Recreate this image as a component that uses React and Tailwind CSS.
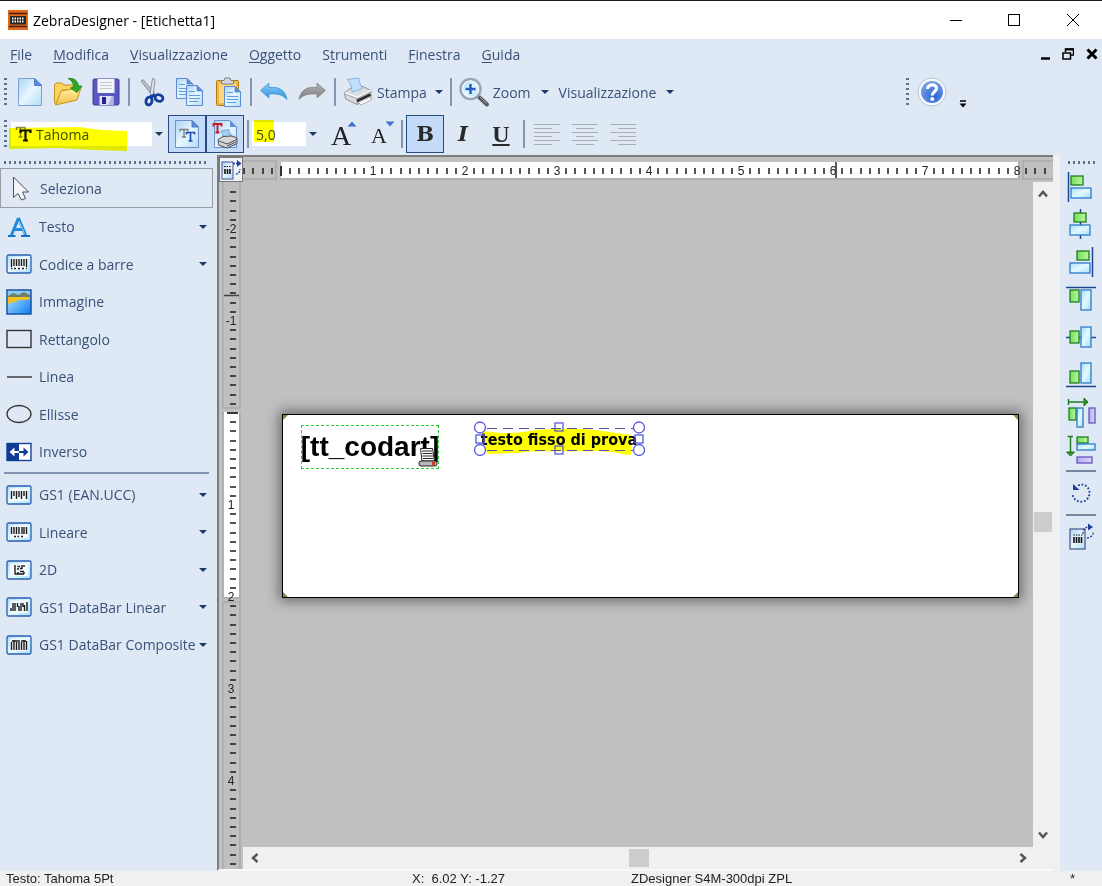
import React, { useState } from 'react';

const CM = 92;

/* ---------- toolbar icons ---------- */

function IconDefs() {
  return (
    <svg width="0" height="0" className="absolute" aria-hidden="true">
      <defs>
        <linearGradient id="paper" x1="0" y1="0" x2="1" y2="1">
          <stop offset="0" stopColor="#a9d4f5" />
          <stop offset="0.5" stopColor="#e8f6fe" />
          <stop offset="1" stopColor="#b4dcf8" />
        </linearGradient>
        <linearGradient id="folder" x1="0" y1="0" x2="0" y2="1">
          <stop offset="0" stopColor="#fff3a8" />
          <stop offset="1" stopColor="#f3bf45" />
        </linearGradient>
        <linearGradient id="green" x1="0" y1="0" x2="1" y2="0">
          <stop offset="0" stopColor="#76e05a" />
          <stop offset="1" stopColor="#b8f79a" />
        </linearGradient>
        <linearGradient id="blue" x1="0" y1="0" x2="1" y2="1">
          <stop offset="0" stopColor="#a6dcfb" />
          <stop offset="0.5" stopColor="#e2f9ff" />
          <stop offset="1" stopColor="#a8defc" />
        </linearGradient>
        <linearGradient id="violet" x1="0" y1="0" x2="1" y2="0">
          <stop offset="0" stopColor="#b3abf0" />
          <stop offset="1" stopColor="#dcd8fb" />
        </linearGradient>
        <linearGradient id="undo" x1="0" y1="0" x2="0" y2="1">
          <stop offset="0" stopColor="#8fd0fa" />
          <stop offset="1" stopColor="#2c8fd8" />
        </linearGradient>
        <linearGradient id="redo" x1="0" y1="0" x2="0" y2="1">
          <stop offset="0" stopColor="#b4b4b4" />
          <stop offset="1" stopColor="#7c7c7c" />
        </linearGradient>
        <linearGradient id="sea" x1="0" y1="0" x2="1" y2="1">
          <stop offset="0" stopColor="#c8ecff" />
          <stop offset="1" stopColor="#0a7ff0" />
        </linearGradient>
        <radialGradient id="help" cx="0.6" cy="0.7" r="0.8">
          <stop offset="0" stopColor="#2a63cf" />
          <stop offset="1" stopColor="#7fa9ec" />
        </radialGradient>
      </defs>
    </svg>
  );
}

function Svg({ w = 30, h = 30, children }) {
  return (
    <svg width={w} height={h} viewBox={`0 0 ${w} ${h}`} fill="none" className="shrink-0 overflow-visible" aria-hidden="true">
      {children}
    </svg>
  );
}

const NewIcon = () => (
  <Svg>
    <path d="M3.500 1.500H20L26.500 8V28.500H3.500Z" fill="url(#paper)" stroke="#7d9fd6" />
    <path d="M19.500 1.500V8.500H26.500Z" fill="#5d90d8" stroke="#4d7dc8" />
  </Svg>
);

const OpenIcon = () => (
  <Svg>
    <path d="M1.500 26V8L3 6H9L11 8H20V13H9L3 27Z" fill="#f8d460" stroke="#c79418" />
    <path d="M2.500 28L8 14L28 10.500L24 23Z" fill="url(#folder)" stroke="#c79418" strokeLinejoin="round" />
    <path d="M15 1.500C21 0.500 25 4 25.500 9H29L24 15.500L17.500 11L21 10C20.500 5.500 18 3 15 1.500Z" fill="#2fa82a" stroke="#1b7d1a" strokeWidth="0.800" />
  </Svg>
);

const SaveIcon = () => (
  <Svg>
    <rect x="2" y="2" width="26" height="26" rx="1.500" fill="#5a57c0" stroke="#3f3c9c" />
    <rect x="6.500" y="2" width="17" height="14" fill="#f5f6fa" />
    <path d="M9 5.500H21M9 8.500H21M9 11.500H21" stroke="#c3c7d2" />
    <rect x="8.500" y="19" width="14" height="9" fill="#dfe2f4" />
    <rect x="11" y="20" width="4" height="7" fill="#23208a" />
    <path d="M17 28L21 19H22.500V28Z" fill="#b0b4e0" />
  </Svg>
);

const CutIcon = () => (
  <Svg>
    <path d="M4 4L15.500 19L17.500 16L6 2.500Z" fill="#b9c0cc" stroke="#76808f" strokeWidth="0.800" />
    <path d="M15.500 1.500L13 17L16 19L18 2.500Z" fill="#e3e7ee" stroke="#76808f" strokeWidth="0.800" />
    <ellipse cx="12" cy="24" rx="3" ry="4" stroke="#123f9c" strokeWidth="2.800" transform="rotate(15 12 24)" />
    <ellipse cx="22" cy="21" rx="4" ry="3.200" stroke="#123f9c" strokeWidth="2.800" transform="rotate(20 22 21)" />
    <path d="M13 20L18 18" stroke="#123f9c" strokeWidth="3.500" />
  </Svg>
);

function Page({ x, y }) {
  return (
    <g transform={`translate(${x} ${y})`}>
      <path d="M0.500 0.500H11L16.500 6V20.500H0.500Z" fill="url(#paper)" stroke="#5c8bd0" />
      <path d="M11 0.500V6H16.500Z" fill="#5d90d8" stroke="#4d7dc8" strokeWidth="0.700" />
      <path d="M3 6.500H9M3 10.500H14M3 13.500H14M3 16.500H12" stroke="#5a9de0" />
    </g>
  );
}

const CopyIcon = () => (
  <Svg>
    <Page x={1} y={1} />
    <Page x={11} y={8} />
  </Svg>
);

const PasteIcon = () => (
  <Svg>
    <rect x="3.500" y="3.500" width="22" height="25" rx="1" fill="#f1b83f" stroke="#b07a14" />
    <rect x="6" y="6" width="17" height="20" fill="#fbd97c" />
    <path d="M8.500 7V3.500H11L12 1H17L18 3.500H20.500V7Z" fill="#d4d8dd" stroke="#777f8a" />
    <Page x={11} y={9} />
  </Svg>
);

const UndoIcon = () => (
  <Svg>
    <path d="M1.500 13.500L10 6V10.500C19 9.500 26 12 28 22.500C24 17.500 18 16.500 10 17V21Z" fill="url(#undo)" stroke="#3f95d6" strokeWidth="0.800" />
  </Svg>
);

const RedoIcon = () => (
  <Svg>
    <path d="M28.500 13.500L20 6V10.500C11 9.500 4 12 2 22.500C6 17.500 12 16.500 20 17V21Z" fill="url(#redo)" stroke="#858585" strokeWidth="0.800" />
  </Svg>
);

const PrinterIcon = () => (
  <Svg>
    <path d="M1.500 15.500L8 11L20 9.500L28 13.500V20.500L14 27.500L2.500 22Z" fill="#dcdde1" stroke="#7c7e84" strokeWidth="0.800" strokeLinejoin="round" />
    <path d="M4 2.500L16 1C15.500 5 18 8 19.500 11.500L9 15C9 10 7 5 4 2.500Z" fill="#bfe0fb" stroke="#7ba6da" strokeWidth="0.800" />
    <path d="M2 16L14 20.500L28 13.500" stroke="#fff" strokeWidth="1.500" />
    <path d="M2 17L14 21.500L28 14.500M14 21V27" stroke="#8d8f95" strokeWidth="0.800" />
    <path d="M14 24L27.500 17.500" stroke="#2b2b2b" strokeWidth="2.500" />
    <path d="M15 25.500L27 20L29 22.500L18 28Z" fill="#fafafa" stroke="#8d8f95" strokeWidth="0.700" />
  </Svg>
);

const ZoomIcon = () => (
  <Svg>
    <path d="M20 20L28 27.500" stroke="#55585e" strokeWidth="4" strokeLinecap="round" />
    <path d="M21 20L27.500 26.500" stroke="#a1a4aa" strokeWidth="1" />
    <circle cx="11.500" cy="12" r="10" fill="#ecf5fe" stroke="#9aa6b8" strokeWidth="2.500" />
    <circle cx="11.500" cy="12" r="8" fill="url(#blue)" stroke="#ffffff" strokeWidth="0.800" />
    <path d="M11.500 7V17M6.500 12H16.500" stroke="#2559c4" strokeWidth="2.400" />
  </Svg>
);

const HelpIcon = () => (
  <Svg>
    <circle cx="15" cy="15" r="14" fill="#f7f9fd" stroke="#b9c3d6" />
    <circle cx="15" cy="15" r="11" fill="url(#help)" />
    <path d="M10.500 12C10.500 6.500 20 6.500 19.500 11.500C19 15 15.300 14.500 15.300 18.500" stroke="#fff" strokeWidth="3.200" />
    <circle cx="15.300" cy="22" r="2" fill="#fff" />
  </Svg>
);

const FontSheetIcon = () => (
  <Svg>
    <path d="M3.500 1.500H20L26.500 8V28.500H3.500Z" fill="url(#paper)" stroke="#6d92cf" />
    <path d="M20 1.500V8H26.500Z" fill="#5d90d8" stroke="#4d7dc8" />
    <path d="M8 12.500V10.500H16V12.500M12 10.500V18M10 18H14" stroke="#777c86" strokeWidth="1.300" />
    <path d="M14.500 15.500V13.500H22.500V15.500M18.500 13.500V22M16.500 22H20.500" stroke="#1d4fb0" strokeWidth="1.700" />
  </Svg>
);

const FontPrinterIcon = () => (
  <Svg>
    <path d="M4.500 1.500H20L26.500 8V28.500H4.500Z" fill="url(#paper)" stroke="#6d92cf" />
    <path d="M20 1.500V8H26.500Z" fill="#5d90d8" />
    <path d="M3.500 7.500V5H11.500V7.500M7.500 5V13.500M5.500 13.500H9.500" stroke="#c41a26" strokeWidth="1.800" />
    <path d="M11 12L19 10.500C19 14 21 15 22 18L13 20C13 16 12 14 11 12Z" fill="#a5cdf6" stroke="#5f94d6" strokeWidth="0.800" />
    <path d="M8 20.500L13 17.500L22 17L27 19V24.500L17 29L8.500 26Z" fill="#d5d6da" stroke="#4c4e54" />
    <path d="M9 22L17 25L27 20.500M17 27L26 23" stroke="#4c4e54" />
  </Svg>
);

const TrueTypeIcon = () => (
  <Svg w={18} h={18}>
    <path d="M1.500 5V2.500H10V5M5.500 2.500V12M3.500 12H7.500" stroke="#8a8a50" strokeWidth="1.500" />
    <path d="M5.500 8V5.500H15.500V8M10.500 5.500V15.500M8 15.500H13" stroke="#111" strokeWidth="2.200" />
  </Svg>
);

function GrowIcon({ down }) {
  return (
    <div className="relative w-[30px] h-[30px]">
      <span className={`block text-center leading-[34px] text-[#222] font-['Liberation_Serif',serif] ${down ? 'text-[22px]' : 'text-[28px]'}`}>A</span>
      <svg width="10" height="6" viewBox="0 0 10 6" className="absolute -right-px top-0.5" aria-hidden="true">
        <path d={down ? 'M0.500 0.500H9.500L5 5.500Z' : 'M0.500 5.500H9.500L5 0.500Z'} fill="#3e74d0" />
      </svg>
    </div>
  );
}

function LinesIcon({ align }) {
  return (
    <Svg>
      {[0, 1, 2, 3, 4, 5].map(i => {
        const len = i % 2 ? 18 : 26;
        const x = align === 'left' ? 2 : align === 'right' ? 28 - len : 15 - len / 2;
        return <path key={i} d={`M${x} ${5.5 + i * 4}h${len}`} stroke="#a9aeb5" />;
      })}
    </Svg>
  );
}

/* ---------- toolbox icons ---------- */

const CursorIcon = () => (
  <Svg w={26} h={26}>
    <path d="M6.500 2V22.500L11 18.500L14.500 25L18.500 23.500L15.500 17H21.500Z" fill="#f4f5f7" stroke="#4b4f57" strokeLinejoin="round" />
  </Svg>
);

const LetterIcon = () => (
  <Svg w={26} h={26}>
    <path d="M12.500 4L19.500 21M12.500 4L5.500 21M8 15.500H17" stroke="#2188dc" strokeWidth="3" />
    <path d="M2 22H9.500M15 22H24" stroke="#1670c4" strokeWidth="2" />
    <path d="M13 7L18.500 20" stroke="#8fd2fb" strokeWidth="1" />
  </Svg>
);

function BarsIcon({ bars }) {
  return (
    <Svg w={26} h={20}>
      <rect x="1" y="1" width="24" height="18" rx="1.500" fill="url(#blue)" stroke="#2a5db0" strokeWidth="1.300" />
      <path d="M4 3.500H22V16H4Z" fill="#f4fbff" />
      <path d={bars} stroke="#1a1a1a" strokeWidth="1.400" />
    </Svg>
  );
}

const BARS = {
  code: 'M5.500 5V13M8 5V12M10.500 5V12M13 5V12M15.500 5V12M18 5V12M20.500 5V13M5 14.500H6.500M8 14.500H10M12 14.500H14M16 14.500H18M20 14.500H21',
  ean: 'M5.500 6V14M8 6V11M10.500 6V14M13 6V12M15.500 6V14M18 6V11M20.500 6V14',
  linear: 'M5.500 5V12M8 5V12M10.500 5V12M13 5V12M16 5V12M18 5V12M20.500 5V12M8 14.500H10M11.500 14.500H13M15 14.500H17',
  matrix: 'M9 5V14.500M9 14H18M11.500 6.500H14M16 5V9M11 9H13M14 11.500H18M12 12V14M14 8.500H16M18 5V7M18 12V14',
  databar: 'M5 14V11M7 14V6M9 6V14M11.500 6V10M13 9V14M15 14V6M17 6V10M18.500 8V14M21 5V14',
  composite: 'M5.500 7V15M8 5V15M10.500 7V15M13 5V15M15.500 7V15M18 5V15M20.500 6V15M6 6H12M15 6H20',
};

const ImageIcon = () => (
  <Svg w={26} h={26}>
    <rect x="1" y="1" width="24" height="24" fill="url(#sea)" stroke="#1a50a8" strokeWidth="1.500" />
    <path d="M2 2H24V7H2Z" fill="#8ccaf2" />
    <path d="M2 7L7 4L12 6L18 3L24 6V9H2Z" fill="#6f8068" />
    <path d="M2 8H24V10.500L13 11L2 15Z" fill="#f5c21c" />
  </Svg>
);

const RectIcon = () => (
  <Svg w={26} h={20}>
    <rect x="1" y="1.500" width="24" height="17" stroke="#333" strokeWidth="1.400" />
  </Svg>
);

const LineIcon = () => (
  <Svg w={26} h={20}>
    <path d="M1 10H26" stroke="#333" strokeWidth="1.400" />
  </Svg>
);

const EllipseIcon = () => (
  <Svg w={26} h={20}>
    <ellipse cx="13" cy="10" rx="12" ry="8.500" stroke="#333" strokeWidth="1.300" />
  </Svg>
);

const InverseIcon = () => (
  <Svg w={26} h={20}>
    <rect x="1" y="1.500" width="24" height="17" fill="#fff" stroke="#12409a" strokeWidth="1.400" />
    <path d="M1 1.500H13V18.500H1Z" fill="#0f3a96" />
    <path d="M13 10H7" stroke="#fff" strokeWidth="2" />
    <path d="M8.500 5.500L3.500 10L8.500 14.500Z" fill="#fff" />
    <path d="M13 10H19" stroke="#0f3a96" strokeWidth="2" />
    <path d="M17.500 5.500L22.500 10L17.500 14.500Z" fill="#0f3a96" />
  </Svg>
);

/* ---------- alignment icons ---------- */

// g = green rect, b = blue rect, line = guide
const ALIGN = [
  { label: 'Allinea a sinistra', g: [5, 4, 12, 9], b: [5, 16, 20, 10], line: 'M2.500 0V30' },
  { label: 'Centra orizzontalmente', g: [8, 4, 12, 9], b: [4, 16, 20, 10], line: 'M14.500 0V30' },
  { label: 'Allinea a destra', g: [11, 4, 12, 9], b: [4, 16, 20, 10], line: 'M26.500 0V30' },
  { label: 'Allinea in alto', g: [4, 6, 9, 12], b: [15, 6, 10, 20], line: 'M0 3.500H30' },
  { label: 'Centra verticalmente', g: [4, 9, 9, 12], b: [15, 5, 10, 20], line: 'M0 15.500H30' },
  { label: 'Allinea in basso', g: [4, 12, 9, 12], b: [15, 4, 10, 20], line: 'M0 27.500H30' },
];

function AlignIcon({ g, b, line }) {
  return (
    <Svg>
      <path d={line} stroke="#1d4690" strokeWidth="1.500" />
      <rect x={g[0]} y={g[1]} width={g[2]} height={g[3]} fill="url(#green)" stroke="#1f7a24" strokeWidth="1.300" />
      <rect x={b[0]} y={b[1]} width={b[2]} height={b[3]} fill="url(#blue)" stroke="#2b7cc8" strokeWidth="1.300" />
    </Svg>
  );
}

const SpreadHIcon = () => (
  <Svg>
    <path d="M2.500 2V8M3 5H18" stroke="#1f7a24" strokeWidth="1.400" />
    <path d="M18 1L22 5L18 9Z" fill="#2f9a2f" stroke="#1f6a24" />
    <rect x="3" y="11" width="7" height="12" fill="url(#green)" stroke="#1f7a24" strokeWidth="1.300" />
    <rect x="11" y="11" width="6" height="19" fill="url(#blue)" stroke="#2b7cc8" strokeWidth="1.300" />
    <rect x="23" y="11" width="6" height="15" fill="url(#violet)" stroke="#6256b8" strokeWidth="1.300" />
  </Svg>
);

const SpreadVIcon = () => (
  <Svg>
    <path d="M1.500 2.500H7M4.500 3V18" stroke="#1f7a24" strokeWidth="1.400" />
    <path d="M0.500 18H8.500L4.500 22Z" fill="#2f9a2f" stroke="#1f6a24" />
    <rect x="11" y="3" width="11" height="6" fill="url(#green)" stroke="#1f7a24" strokeWidth="1.300" />
    <rect x="11" y="10" width="18" height="6" fill="url(#blue)" stroke="#2b7cc8" strokeWidth="1.300" />
    <rect x="11" y="23" width="15" height="6" fill="url(#violet)" stroke="#6256b8" strokeWidth="1.300" />
  </Svg>
);

const RotateIcon = () => (
  <Svg>
    <path d="M12 7.500C18 4.500 23.500 9 23.500 15A8.500 8.500 0 0 1 6.500 15.500" stroke="#1d3f9a" strokeWidth="1.800" strokeDasharray="1.800 1.800" />
    <path d="M7 6V12H13.500Z" fill="#1d3f9a" />
  </Svg>
);

const LabelSetupIcon = () => (
  <Svg>
    <rect x="4" y="7" width="15" height="20" fill="url(#paper)" stroke="#44558a" strokeWidth="1.200" />
    <path d="M8 15V21M10.500 15V21M13 15V21M15.500 15V21" stroke="#111" strokeWidth="1.600" />
    <path d="M7.500 13H16.500" stroke="#111" strokeDasharray="1.500 1" />
    <path d="M17 12C17 7 19 5 23 5M21 16C25 16 27 13 27.500 10" stroke="#1d3f9a" strokeWidth="1.300" strokeDasharray="2 1.500" />
    <path d="M22 1.500L27 5L22 8.500Z" fill="#1d3f9a" />
  </Svg>
);

/* ---------- building blocks ---------- */

function Caret() {
  return <span className="w-0 h-0 border-x-4 border-x-transparent border-t-4 border-t-[#1e3a66] shrink-0" />;
}

function Grip() {
  return <span className="h-7 w-[3px] mx-1 shrink-0 bg-[repeating-linear-gradient(to_bottom,#5f6f8c_0_2px,transparent_2px_5px)]" />;
}

function Divider() {
  return <span className="w-2 flex justify-center shrink-0"><span className="w-0.5 h-7 bg-[#8795ae]" /></span>;
}

function ToolButton({ label, active, children }) {
  return (
    <button
      type="button"
      title={label}
      aria-label={label}
      className={`w-[38px] h-[38px] flex items-center justify-center shrink-0 ${active ? 'bg-[#c3dbf8] border border-[#274a80]' : ''}`}
    >
      {children}
    </button>
  );
}

function ToolboxItem({ item }) {
  const Icon = item.icon;
  return (
    <li className="h-[37px] even:h-[38px]">
      <button type="button" className="w-full h-full flex items-center pl-1.5 pr-2.5 text-left">
        <span className="w-[26px] flex justify-center shrink-0"><Icon bars={item.bars} /></span>
        <span className="flex-1 ml-[7px] whitespace-nowrap">{item.label}</span>
        {item.menu && <Caret />}
      </button>
    </li>
  );
}

const MENUS = ['File', 'Modifica', 'Visualizzazione', 'Oggetto', 'Strumenti', 'Finestra', 'Guida'];
// index of the underlined shortcut letter
const SHORTCUTS = { Strumenti: 1 };

const TOOLS = [
  { label: 'Testo', icon: LetterIcon, menu: true },
  { label: 'Codice a barre', icon: BarsIcon, bars: BARS.code, menu: true },
  { label: 'Immagine', icon: ImageIcon },
  { label: 'Rettangolo', icon: RectIcon },
  { label: 'Linea', icon: LineIcon },
  { label: 'Ellisse', icon: EllipseIcon },
  { label: 'Inverso', icon: InverseIcon },
];

const CODES = [
  { label: 'GS1 (EAN.UCC)', icon: BarsIcon, bars: BARS.ean, menu: true },
  { label: 'Lineare', icon: BarsIcon, bars: BARS.linear, menu: true },
  { label: '2D', icon: BarsIcon, bars: BARS.matrix, menu: true },
  { label: 'GS1 DataBar Linear', icon: BarsIcon, bars: BARS.databar, menu: true },
  { label: 'GS1 DataBar Composite', icon: BarsIcon, bars: BARS.composite, menu: true },
];

function MenuLabel({ name }) {
  const i = SHORTCUTS[name] || 0;
  return (
    <>
      {name.slice(0, i)}
      <span className="underline underline-offset-2">{name[i]}</span>
      {name.slice(i + 1)}
    </>
  );
}

function range(from, to) {
  const out = [];
  for (let i = from; i <= to; i++) out.push(i);
  return out;
}

function HorizontalRuler() {
  const zero = 38;
  const end = zero + 8 * CM;
  return (
    <svg width="100%" height="25" className="block" role="img" aria-label="Righello orizzontale">
      <rect x="-4" y="4" width="37" height="18" stroke="#a9a9a9" fill="none" strokeWidth="1.500" />
      <rect x={zero} y="5" width={end - zero + 1} height="16" fill="#fff" />
      <path d={`M${zero - 1} 22H${end + 2}V4`} stroke="#a9a9a9" strokeWidth="1.500" fill="none" />
      <rect x={end + 6} y="4" width="60" height="18" stroke="#a9a9a9" fill="none" strokeWidth="1.500" />
      <path d={`M${zero} 9V19`} stroke="#333" strokeWidth="2" />
      {range(-4, 84).filter(i => i % 10 !== 0).map(i => (
        <path key={i} d={`M${Math.round(zero + i * CM / 10)} 11v6`} stroke="#1a1a1a" strokeWidth="1.500" />
      ))}
      {range(1, 8).map(n => (
        <text key={n} x={zero + n * CM} y="18" textAnchor="middle" fontSize="12" fontFamily="Liberation Sans, sans-serif" fill="#222">{n}</text>
      ))}
      <path d={`M${zero + 555} 5V21`} stroke="#222" strokeWidth="1.500" />
    </svg>
  );
}

function VerticalRuler() {
  const zero = 231;
  const end = zero + 2 * CM;
  return (
    <svg width="24" height="100%" className="block" role="img" aria-label="Righello verticale">
      <rect x="4" y="-4" width="17" height="230" stroke="#a9a9a9" fill="none" strokeWidth="1.500" />
      <rect x="5" y={zero - 1} width="15" height={2 * CM + 1} fill="#fff" />
      <path d={`M4 ${zero - 1}V${end + 1}H21V${zero - 1}`} stroke="#a9a9a9" strokeWidth="1.500" fill="none" />
      <rect x="4" y={end + 5} width="17" height="700" stroke="#a9a9a9" fill="none" strokeWidth="1.500" />
      <path d={`M8 ${zero}H19`} stroke="#333" strokeWidth="2" />
      {range(-24, 49).filter(i => i % 10 !== 0).map(i => (
        <path key={i} d={`M11 ${Math.round(zero + i * CM / 10)}h6`} stroke="#1a1a1a" strokeWidth="1.500" />
      ))}
      {[-2, -1, 1, 2, 3, 4].map(n => (
        <text key={n} x="12" y={zero + n * CM + 4} textAnchor="middle" fontSize="12" fontFamily="Liberation Sans, sans-serif" fill="#222">{n}</text>
      ))}
      <path d="M5 113.500H20" stroke="#444" strokeWidth="1.500" />
    </svg>
  );
}

function Chevron({ d, label }) {
  return (
    <button type="button" aria-label={label} className="w-5 h-5 flex items-center justify-center shrink-0">
      <svg width="12" height="12" viewBox="0 0 12 12" fill="none"><path d={d} stroke="#555" strokeWidth="2.500" /></svg>
    </button>
  );
}

/* Label sheet with its two text objects */
function LabelSheet() {
  return (
    <div className="absolute left-[39px] top-[232px] w-[737px] h-[184px] bg-white border border-black shadow-[0_0_12px_3px_rgba(0,0,0,0.45)]">
      <span className="absolute left-0 top-0 border-r-5 border-r-transparent border-t-5 border-t-[#8d8745]" />
      <span className="absolute right-0 top-0 border-l-5 border-l-transparent border-t-5 border-t-[#8d8745]" />
      <span className="absolute left-0 bottom-0 border-r-5 border-r-transparent border-b-5 border-b-[#8d8745]" />
      <span className="absolute right-0 bottom-0 border-l-5 border-l-transparent border-b-5 border-b-[#8d8745]" />

      <div className="absolute left-[18px] top-[10px] w-[138px] h-[44px] border border-dashed border-[#2fcf2f] flex items-center justify-center font-['Liberation_Sans',sans-serif] text-[28px] font-bold text-black whitespace-nowrap">
        [tt_codart]
        <svg width="20" height="20" viewBox="0 0 20 20" fill="none" className="absolute right-0 bottom-px" aria-hidden="true">
          <path d="M2.500 1.500H14.500L16.500 14H4Z" fill="#fff" stroke="#222" />
          <path d="M4 4H14M4.500 6.500H14.500M4.500 9H15M5 11.500H15" stroke="#222" />
          <rect x="1" y="14" width="18" height="5" rx="2" fill="#b7b7bc" stroke="#222" />
          <rect x="14" y="15" width="3" height="3" fill="#d32" />
        </svg>
      </div>

      <div className="absolute left-[190px] top-[5px] w-[172px] h-[36px] flex items-center justify-center pt-1">
        <span className="font-['DejaVu_Sans_Condensed','DejaVu_Sans',sans-serif] text-[16px] font-bold text-black whitespace-nowrap">testo fisso di prova</span>
        <svg width="172" height="36" viewBox="0 0 172 36" fill="none" className="absolute inset-0 mix-blend-multiply" aria-hidden="true">
          <path d="M10 11C25 13 35 14 50 12C70 8 110 8 130 11L158 15V35C150 35 140 31 125 31C105 32 60 30 45 33L14 34Z" fill="#ffff00" />
        </svg>
        <svg width="172" height="36" viewBox="0 0 172 36" fill="none" className="absolute inset-0" aria-hidden="true">
          <path d="M14 8.500H160M14 30.500H160" stroke="#5555a8" strokeDasharray="10 6" />
          <g fill="#fff" stroke="#5a5ad8" strokeWidth="1.300">
            <circle cx="7" cy="7.500" r="5.500" />
            <circle cx="166" cy="7.500" r="5.500" />
            <circle cx="7" cy="30" r="5.500" />
            <circle cx="166" cy="30" r="5.500" />
          </g>
          <g stroke="#5a5ad8" strokeWidth="1.300">
            <rect x="3" y="15" width="8" height="8" />
            <rect x="162" y="15" width="8" height="8" />
            <rect x="82" y="3" width="8" height="8" />
            <rect x="82" y="26" width="8" height="8" />
          </g>
        </svg>
      </div>
    </div>
  );
}

export default function App() {
  const [font, setFont] = useState('Tahoma');
  const [size, setSize] = useState('5,0');

  return (
    <div className="h-screen flex flex-col overflow-hidden bg-[#dfe9f5] font-['Open_Sans','Noto_Sans',sans-serif] text-[14px] text-[#3a5078]">
      <IconDefs />

      {/* Title bar */}
      <header className="h-[39px] shrink-0 flex items-center bg-white border-t border-[#1b1b26] text-black pl-2">
        <svg width="20" height="20" viewBox="0 0 20 20" aria-hidden="true">
          <rect width="20" height="20" fill="#e06a1e" />
          <path d="M1 3.500H19M1 16.500H19" stroke="#4a1c08" strokeWidth="1.500" />
          <rect x="2" y="6" width="16" height="8.500" rx="1" fill="#2a2422" />
          <path d="M4 8.500H16M4 11.500H16" stroke="#eee" strokeWidth="2" strokeDasharray="1.500 1" />
        </svg>
        <h1 className="ml-[5px] flex-1 text-[14px]">ZebraDesigner - [Etichetta1]</h1>
        <button type="button" aria-label="Riduci a icona" className="w-[58px] h-full flex items-center justify-center">
          <svg width="12" height="12"><path d="M0 6.500H12" stroke="#000" /></svg>
        </button>
        <button type="button" aria-label="Ingrandisci" className="w-[58px] h-full flex items-center justify-center">
          <svg width="12" height="12" fill="none"><rect x="0.500" y="0.500" width="11" height="11" stroke="#000" /></svg>
        </button>
        <button type="button" aria-label="Chiudi" className="w-[59px] h-full flex items-center justify-center">
          <svg width="12" height="12"><path d="M0 0L12 12M12 0L0 12" stroke="#000" /></svg>
        </button>
      </header>

      {/* Menu bar */}
      <nav className="h-8 shrink-0 flex items-center pl-2.5 pr-1 pb-0.5">
        <div className="flex-1 flex gap-[21px]">
          {MENUS.map(name => (
            <button key={name} type="button"><MenuLabel name={name} /></button>
          ))}
        </div>
        <div className="flex items-center gap-3">
          <button type="button" aria-label="Riduci finestra">
            <svg width="12" height="12"><path d="M3 10.500H12" stroke="#000" strokeWidth="2.500" /></svg>
          </button>
          <button type="button" aria-label="Ripristina finestra">
            <svg width="12" height="12" fill="none"><path d="M3.500 4V1H11.500V7H9" stroke="#000" strokeWidth="1.500" /><path d="M3 1.500H12" stroke="#000" strokeWidth="2" /><rect x="1" y="5" width="7.500" height="6" stroke="#000" strokeWidth="1.500" /></svg>
          </button>
          <button type="button" aria-label="Chiudi finestra">
            <svg width="12" height="12"><path d="M1.500 1.500L10.500 10.500M10.500 1.500L1.500 10.500" stroke="#000" strokeWidth="3" /></svg>
          </button>
        </div>
      </nav>

      {/* Main toolbar */}
      <div className="h-[42px] shrink-0 flex items-center">
        <Grip />
        <ToolButton label="Nuovo"><NewIcon /></ToolButton>
        <ToolButton label="Apri"><OpenIcon /></ToolButton>
        <ToolButton label="Salva"><SaveIcon /></ToolButton>
        <Divider />
        <ToolButton label="Taglia"><CutIcon /></ToolButton>
        <ToolButton label="Copia"><CopyIcon /></ToolButton>
        <ToolButton label="Incolla"><PasteIcon /></ToolButton>
        <Divider />
        <ToolButton label="Annulla"><UndoIcon /></ToolButton>
        <ToolButton label="Ripeti"><RedoIcon /></ToolButton>
        <Divider />
        <button type="button" className="flex items-center gap-1 pl-1">
          <PrinterIcon />
          Stampa
          <span className="w-4 flex justify-center"><Caret /></span>
        </button>
        <Divider />
        <button type="button" className="flex items-center gap-1 pl-1">
          <ZoomIcon />
          Zoom
          <span className="w-5 flex justify-center"><Caret /></span>
        </button>
        <button type="button" className="flex items-center gap-1 pl-1">
          Visualizzazione
          <span className="w-5 flex justify-center"><Caret /></span>
        </button>
        <div className="ml-auto flex items-center pr-[135px]">
          <Grip />
          <ToolButton label="Guida"><HelpIcon /></ToolButton>
          <button type="button" aria-label="Altri pulsanti" className="w-4 h-8 flex items-end justify-end">
            <svg width="8" height="8"><path d="M1 1H7" stroke="#000" strokeWidth="1.500" /><path d="M0.500 3.500H7.500L4 7.500Z" fill="#000" /></svg>
          </button>
        </div>
      </div>

      {/* Text toolbar */}
      <div className="h-[42px] shrink-0 flex items-center">
        <Grip />
        <div className="relative w-[155px] h-6 flex items-center bg-white mr-0.5">
          <span className="absolute left-1"><TrueTypeIcon /></span>
          <select aria-label="Carattere" value={font} onChange={e => setFont(e.target.value)} className="w-full h-full appearance-none pl-[25px]">
            <option>Tahoma</option>
            <option>Arial</option>
          </select>
          <span className="absolute right-0 inset-y-0 w-[14px] flex items-center justify-center bg-[#dfe9f5] pointer-events-none"><Caret /></span>
          <svg width="122" height="26" viewBox="0 0 122 26" className="absolute -left-0.5 top-1 mix-blend-multiply pointer-events-none" aria-hidden="true">
            <path d="M0 2L70 1L92 4L118 5V25L85 24L50 22L0 23Z" fill="#ffff00" />
          </svg>
        </div>
        <ToolButton label="Caratteri TrueType" active><FontSheetIcon /></ToolButton>
        <ToolButton label="Caratteri stampante" active><FontPrinterIcon /></ToolButton>
        <Divider />
        <div className="relative w-[68px] h-6 bg-white mr-0.5">
          <select aria-label="Dimensione" value={size} onChange={e => setSize(e.target.value)} className="w-full h-full appearance-none pl-1">
            <option>5,0</option>
            <option>6,0</option>
          </select>
          <span className="absolute right-0 inset-y-0 w-[14px] flex items-center justify-center bg-[#dfe9f5] pointer-events-none"><Caret /></span>
          <span className="absolute left-0.5 -top-0.5 w-5 h-[22px] bg-[#ffff00] mix-blend-multiply pointer-events-none" />
        </div>
        <ToolButton label="Aumenta carattere"><GrowIcon /></ToolButton>
        <ToolButton label="Riduci carattere"><GrowIcon down /></ToolButton>
        <Divider />
        <ToolButton label="Grassetto" active>
          <b className="font-['DejaVu_Serif',serif] text-[21px] leading-6 text-[#2a2a2a]">B</b>
        </ToolButton>
        <ToolButton label="Corsivo">
          <i className="font-['DejaVu_Serif',serif] text-[21px] leading-6 text-[#2a2a2a] font-bold">I</i>
        </ToolButton>
        <ToolButton label="Sottolineato">
          <u className="font-['Liberation_Serif',serif] text-[24px] leading-6 text-[#2a2a2a] font-bold underline-offset-2">U</u>
        </ToolButton>
        <Divider />
        <ToolButton label="Testo a sinistra"><LinesIcon align="left" /></ToolButton>
        <ToolButton label="Testo al centro"><LinesIcon align="center" /></ToolButton>
        <ToolButton label="Testo a destra"><LinesIcon align="right" /></ToolButton>
      </div>

      <div className="flex-1 min-h-0 flex">
        {/* Toolbox */}
        <aside className="w-[217px] shrink-0">
          <div className="ml-1 mr-2 mt-1.5 mb-1 h-[3px] bg-[repeating-linear-gradient(to_right,#5f6f8c_0_2px,transparent_2px_5px)]" />
          <button type="button" className="w-[213px] h-10 flex items-center gap-[7px] pl-1.5 border border-[#999ea6]">
            <CursorIcon />
            Seleziona
          </button>
          <ul>
            {TOOLS.map(item => <ToolboxItem key={item.label} item={item} />)}
          </ul>
          <hr className="ml-1 mr-2 my-0.5 border-t-2 border-[#8493b2]" />
          <ul>
            {CODES.map(item => <ToolboxItem key={item.label} item={item} />)}
          </ul>
        </aside>

        {/* Design area */}
        <main className="flex-1 min-w-0 flex flex-col bg-[#c0c0c0] border-t-2 border-l-2 border-b-2 border-[#7d7d7d] border-b-[#f8f8f8]">
          <div className="flex shrink-0">
            <button type="button" aria-label="Imposta etichetta" className="w-6 h-[25px] shrink-0 bg-[#eef1f6] border border-[#777]">
              <svg width="22" height="22" viewBox="0 0 22 22" fill="none">
                <rect x="2" y="3" width="11" height="17" fill="url(#paper)" stroke="#44558a" />
                <path d="M5 10V15M7.500 10V15M10 10V15" stroke="#111" strokeWidth="1.600" />
                <path d="M4 7.500H11" stroke="#111" strokeDasharray="1.500 1" />
                <path d="M13 4.500H18M16 15C19 15 20 12 20 10" stroke="#1d3f9a" strokeWidth="1.300" strokeDasharray="2 1" />
                <path d="M17 1L21.500 4.500L17 8Z" fill="#1d3f9a" />
              </svg>
            </button>
            <div className="flex-1 min-w-0"><HorizontalRuler /></div>
          </div>
          <div className="flex-1 min-h-0 flex">
            <div className="w-6 shrink-0 overflow-hidden"><VerticalRuler /></div>
            <div className="flex-1 min-w-0 flex flex-col">
              <div className="flex-1 min-h-0 flex">
                <div className="relative flex-1 overflow-hidden"><LabelSheet /></div>
                <div className="w-5 flex flex-col items-center bg-[#f0f0f0] py-0.5">
                  <Chevron label="Scorri su" d="M2 8.500L6 4L10 8.500" />
                  <span className="flex-[309]" />
                  <span className="w-[18px] h-5 bg-[#cdcdcd]" />
                  <span className="flex-[294]" />
                  <Chevron label="Scorri giù" d="M2 3.500L6 8L10 3.500" />
                </div>
              </div>
              <div className="h-[22px] shrink-0 flex items-center justify-between bg-[#f0f0f0] pl-0.5 pr-5">
                <Chevron label="Scorri a sinistra" d="M8.500 2L4 6L8.500 10" />
                <span className="w-5 h-[18px] bg-[#cdcdcd]" />
                <Chevron label="Scorri a destra" d="M3.500 2L8 6L3.500 10" />
              </div>
            </div>
          </div>
        </main>

        {/* Alignment toolbar */}
        <aside className="w-[49px] shrink-0 border-l-7 border-[#f0f0f0] flex flex-col items-center">
          <div className="w-[27px] mt-1.5 mb-1 h-[3px] bg-[repeating-linear-gradient(to_right,#5f6f8c_0_2px,transparent_2px_5px)]" />
          <ul>
            {ALIGN.map(a => (
              <li key={a.label} className="h-[37px] even:h-[38px]">
                <button type="button" title={a.label} aria-label={a.label} className="h-full flex items-center"><AlignIcon {...a} /></button>
              </li>
            ))}
            <li className="h-[37px]"><button type="button" aria-label="Distribuisci orizzontalmente" className="h-full flex items-center"><SpreadHIcon /></button></li>
            <li className="h-[38px]"><button type="button" aria-label="Distribuisci verticalmente" className="h-full flex items-center"><SpreadVIcon /></button></li>
          </ul>
          <hr className="w-[30px] mt-0.5 border-t-2 border-[#76859f]" />
          <button type="button" aria-label="Ruota" className="h-[42px] flex items-center"><RotateIcon /></button>
          <hr className="w-[30px] border-t-2 border-[#76859f]" />
          <button type="button" aria-label="Imposta pagina" className="h-[42px] flex items-center"><LabelSetupIcon /></button>
        </aside>
      </div>

      {/* Status bar */}
      <footer className="h-[15px] shrink-0 flex bg-[#f0f0f0] pl-1.5 font-['Liberation_Sans',sans-serif] text-[13px] leading-[15px] text-[#222] whitespace-pre">
        <span className="flex-[406]">Testo: Tahoma 5Pt</span>
        <span className="flex-[219]">X:  6.02 Y: -1.27</span>
        <span className="flex-[439]">ZDesigner S4M-300dpi ZPL</span>
        <span className="w-8">*</span>
      </footer>
    </div>
  );
}
